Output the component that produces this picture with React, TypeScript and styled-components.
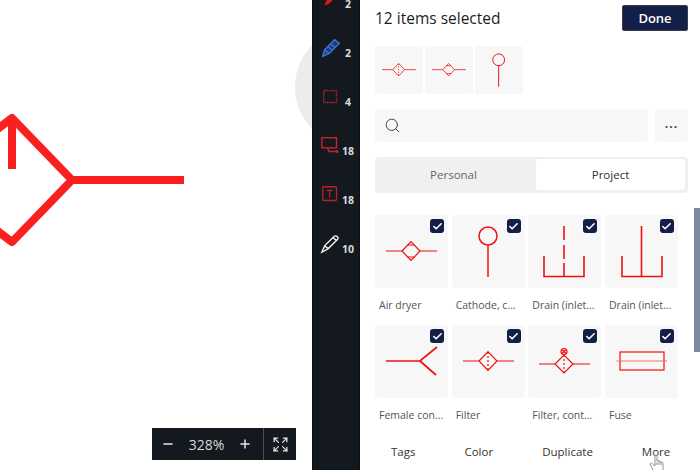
import React from 'react';
import styled, { createGlobalStyle } from 'styled-components';
import { Check, Expand, Minus, Plus, Search } from 'lucide-react';

const GlobalStyle = createGlobalStyle`
  html, body {
    margin: 0;
    height: 100%;
    overflow: hidden;
    background: #fff;
  }
  body {
    font-family: "Open Sans", "Noto Sans", sans-serif;
  }
`;

const Page = styled.div`
  display: flex;
  width: 700px;
  height: 470px;
  overflow: hidden;
`;

const Canvas = styled.div`
  position: relative;
  width: 312px;
  flex-shrink: 0;
  overflow: hidden;
  background: #fff;
`;

const CanvasDrawing = styled.svg`
  position: absolute;
  left: 0;
  top: 90px;
`;

const Halo = styled.div`
  position: absolute;
  left: 295px;
  top: 27px;
  width: 120px;
  height: 120px;
  border-radius: 50%;
  background: #ececec;
`;

const ZoomBar = styled.div`
  position: absolute;
  left: 152px;
  top: 428px;
  width: 144px;
  height: 32px;
  display: flex;
  align-items: center;
  background: #14191f;
  color: #e6e6e6;
`;

const ZoomControls = styled.div`
  flex: 1;
  display: flex;
  align-items: center;
  justify-content: space-between;
  padding: 0 11px 0 9px;
`;

const ZoomValue = styled.span`
  font-size: 14px;
  color: #d8d8d8;
`;

const ZoomFit = styled.div`
  width: 32px;
  height: 100%;
  display: flex;
  align-items: center;
  justify-content: center;
  border-left: 1px solid #4a4f55;
`;

const Rail = styled.div`
  width: 48px;
  flex-shrink: 0;
  display: flex;
  flex-direction: column;
  margin-top: -26px;
  padding-left: 7px;
  box-sizing: border-box;
  background: #14191f;
  border-left: 1px solid #0c0f12;
  border-right: 1px solid #0d1014;
`;

const RailItem = styled.div`
  height: 49px;
  display: flex;
  align-items: flex-end;
`;

const RailCount = styled.span`
  width: 14px;
  margin-left: -1px;
  margin-bottom: 12px;
  text-align: center;
  color: #dcdcdc;
  font-size: 10.5px;
  font-weight: 700;
  line-height: 14px;
`;

const RailIcon = styled.svg`
  width: 22px;
  height: 22px;
  flex-shrink: 0;
  margin-bottom: 13px;
`;

const Panel = styled.div`
  flex: 1;
  min-width: 0;
  position: relative;
  display: flex;
  flex-direction: column;
  padding: 5px 12px 0 15px;
  background: #fff;
`;

const Header = styled.div`
  display: flex;
  align-items: center;
  justify-content: space-between;
`;

const Title = styled.h1`
  margin: 0;
  font-size: 15.5px;
  font-weight: 400;
  color: #1b1f24;
`;

const DoneButton = styled.button`
  width: 66px;
  height: 26px;
  padding: 0;
  border: 1px solid #3b3f45;
  border-radius: 2px;
  background: #141f48;
  color: #fff;
  font: 600 13px "Open Sans", sans-serif;
`;

const ThumbRow = styled.div`
  display: flex;
  gap: 2px;
  margin-top: 15px;
`;

const Thumb = styled.div`
  width: 48px;
  height: 48px;
  background: #f7f7f7;
  border-radius: 3px;
`;

const SearchRow = styled.div`
  display: flex;
  gap: 7px;
  margin-top: 15px;
`;

const SearchBox = styled.div`
  flex: 1;
  height: 33px;
  display: flex;
  align-items: center;
  padding-left: 9px;
  background: #f7f7f7;
  border-radius: 3px;
  color: #444;
`;

const MoreButton = styled.div`
  width: 33px;
  height: 33px;
  display: flex;
  align-items: center;
  justify-content: center;
  padding-bottom: 4px;
  box-sizing: border-box;
  background: #f7f7f7;
  border-radius: 3px;
  color: #444;
  font-size: 12px;
  font-weight: 700;
  letter-spacing: 1px;
`;

const Tabs = styled.div`
  display: grid;
  grid-template-columns: 161px 149px;
  height: 36px;
  margin-top: 15px;
  padding: 2px 3px 3px 0;
  box-sizing: border-box;
  background: #f0f0f0;
  border-radius: 4px;
`;

const Tab = styled.div<{ $active?: boolean }>`
  display: flex;
  align-items: center;
  justify-content: center;
  padding-right: ${({ $active }) => ($active ? '0' : '4px')};
  font-size: 11.5px;
  border-radius: 3px;
  background: ${({ $active }) => ($active ? '#fff' : 'transparent')};
  color: ${({ $active }) => ($active ? '#2b3140' : '#666')};
`;

const Grid = styled.div`
  display: grid;
  grid-template-columns: repeat(4, 73px);
  column-gap: 3.67px;
  margin-top: 22px;
`;

const Item = styled.div`
  height: 110px;
`;

const ItemPreview = styled.div`
  position: relative;
  height: 73px;
  background: #f7f7f7;
  border-radius: 4px;
`;

const Checkbox = styled.span`
  position: absolute;
  top: 4px;
  right: 4px;
  width: 14px;
  height: 14px;
  display: flex;
  align-items: center;
  justify-content: center;
  background: #141f48;
  border-radius: 3px;
  color: #fff;
`;

const ItemLabel = styled.div`
  margin-top: 9px;
  padding: 0 4px;
  font-size: 10.5px;
  line-height: 16px;
  color: #555;
  white-space: nowrap;
`;

const Actions = styled.div`
  display: flex;
  gap: 49px;
  margin-top: 9px;
  padding-left: 16px;
`;

const Action = styled.div`
  font-size: 11.5px;
  line-height: 16px;
  color: #333;
`;

const Scrollbar = styled.div`
  position: absolute;
  right: 0;
  top: 208px;
  width: 6px;
  height: 144px;
  background: #7a8a9c;
`;

const HandCursor = styled.svg`
  position: absolute;
  left: 289px;
  top: 453px;
`;

const RED = '#f01010';

const Glyph = ({ children }: { children: React.ReactNode }) => (
  <svg width="100%" height="100%" viewBox="0 0 73 73" fill="none" stroke={RED} strokeWidth="1.2">
    {children}
  </svg>
);

const Diamond = ({ cy = 36, ry = 9.5 }: { cy?: number; ry?: number }) => (
  <path d={`M27 ${cy}L36 ${cy - ry}L45 ${cy}L36 ${cy + ry}Z`} />
);

const AirDryer = () => (
  <Glyph>
    <path d="M11 36H27M45 36H62" />
    <Diamond />
    <path d="M32.5 30H39.5M32.5 42H39.5" />
  </Glyph>
);

const Cathode = () => (
  <Glyph>
    <circle cx="36" cy="21" r="9" strokeWidth="1.5" />
    <path d="M36 30V62" strokeWidth="1.5" />
  </Glyph>
);

const DrainDashed = () => (
  <Glyph>
    <path d="M36 11V25M36 30V44M36 48V62" strokeWidth="1.6" />
    <path d="M16 41V61.5H56V41" strokeWidth="1.6" />
  </Glyph>
);

const DrainSolid = () => (
  <Glyph>
    <path d="M36.5 11V62" strokeWidth="1.6" />
    <path d="M17 41V61.5H57V41" strokeWidth="1.6" />
  </Glyph>
);

const FemaleConnector = () => (
  <Glyph>
    <path d="M11 36H45L62 22M45 36L61 50" strokeWidth="1.7" />
  </Glyph>
);

const Filter = () => (
  <Glyph>
    <path d="M11 36H27M45 36H62" />
    <Diamond />
    <path d="M36 27V46" strokeDasharray="2 2" />
  </Glyph>
);

const FilterContact = () => (
  <Glyph>
    <path d="M11 39H27M45 39H62" />
    <Diamond cy={39} ry={9} />
    <path d="M36 30V48" strokeDasharray="2 2" />
    <circle cx="36" cy="26.5" r="3" />
    <path d="M34 24.5L38 28.5M38 24.5L34 28.5" />
  </Glyph>
);

const Fuse = () => (
  <Glyph>
    <rect x="15" y="27" width="44" height="18" />
    <path d="M11.5 36H62" stroke="#ee7a55" />
  </Glyph>
);

const items: { name: string; glyph: React.ReactNode }[] = [
  { name: 'Air dryer', glyph: <AirDryer /> },
  { name: 'Cathode, c...', glyph: <Cathode /> },
  { name: 'Drain (inlet...', glyph: <DrainDashed /> },
  { name: 'Drain (inlet...', glyph: <DrainSolid /> },
  { name: 'Female con...', glyph: <FemaleConnector /> },
  { name: 'Filter', glyph: <Filter /> },
  { name: 'Filter, cont...', glyph: <FilterContact /> },
  { name: 'Fuse', glyph: <Fuse /> },
];

const railTools: { count: number; icon: React.ReactNode }[] = [
  {
    count: 2,
    icon: <path d="M5 19L7 14L16 5L19 8L10 17Z" fill="#e01a1a" />,
  },
  {
    count: 2,
    icon: <path d="M3 21L5 14L16 3L21 7L10 18ZM5 14L10 18M8 10L13 14M11 7L16 11" stroke="#3f74d8" strokeWidth="1.5" fill="#1d3a78" />,
  },
  {
    count: 4,
    icon: <rect x="4" y="5" width="14" height="13" rx="1" stroke="#b3242a" strokeWidth="1.5" strokeDasharray="1.6 0.8" fill="none" />,
  },
  {
    count: 18,
    icon: (
      <g stroke="#c4262b" strokeWidth="1.5" fill="none">
        <rect x="2" y="3" width="16" height="11" />
        <path d="M8 14L10 18H18" />
        <circle cx="18.5" cy="18" r="1" fill="#c4262b" />
      </g>
    ),
  },
  {
    count: 18,
    icon: (
      <g stroke="#b3242a" strokeWidth="1.4" fill="none">
        <rect x="3" y="3" width="15" height="15" rx="1" />
        <path d="M7 7H14M10.5 7V15" />
      </g>
    ),
  },
  {
    count: 10,
    icon: (
      <g stroke="#f5efe0" strokeWidth="1.5" fill="none">
        <path d="M2 21L5 14L15 4C16 3 18 3 19 4C20 5 20 6 19 7L9 17Z" />
        <path d="M5 14L9 17M14 5L18 8" />
      </g>
    ),
  },
];

export default function App() {
  return (
    <>
      <GlobalStyle />
      <Page>
        <Canvas>
          <Halo />
          <CanvasDrawing width="200" height="170" viewBox="0 0 200 170" fill="none" stroke="#fa2020" strokeWidth="8">
            <path d="M-30 60L12 28L72 90L12 152L-30 120" strokeLinejoin="round" />
            <path d="M12 28V79" />
            <path d="M72 90H184" />
          </CanvasDrawing>
          <ZoomBar>
            <ZoomControls>
              <Minus size={14} strokeWidth={2.5} />
              <ZoomValue>328%</ZoomValue>
              <Plus size={14} strokeWidth={2.5} />
            </ZoomControls>
            <ZoomFit>
              <Expand size={17} strokeWidth={1.8} />
            </ZoomFit>
          </ZoomBar>
        </Canvas>
        <Rail>
          {railTools.map((tool, i) => (
            <RailItem key={i}>
              <RailIcon viewBox="0 0 24 24">{tool.icon}</RailIcon>
              <RailCount>{tool.count}</RailCount>
            </RailItem>
          ))}
        </Rail>
        <Panel>
          <Header>
            <Title>12 items selected</Title>
            <DoneButton>Done</DoneButton>
          </Header>
          <ThumbRow>
            <Thumb><Filter /></Thumb>
            <Thumb><AirDryer /></Thumb>
            <Thumb><Cathode /></Thumb>
          </ThumbRow>
          <SearchRow>
            <SearchBox>
              <Search size={17} strokeWidth={1.4} />
            </SearchBox>
            <MoreButton>...</MoreButton>
          </SearchRow>
          <Tabs>
            <Tab>Personal</Tab>
            <Tab $active>Project</Tab>
          </Tabs>
          <Grid>
            {items.map((item, i) => (
              <Item key={i}>
                <ItemPreview>
                  {item.glyph}
                  <Checkbox>
                    <Check size={11} strokeWidth={3.5} />
                  </Checkbox>
                </ItemPreview>
                <ItemLabel>{item.name}</ItemLabel>
              </Item>
            ))}
          </Grid>
          <Actions>
            <Action>Tags</Action>
            <Action>Color</Action>
            <Action>Duplicate</Action>
            <Action>More</Action>
          </Actions>
          <Scrollbar />
          <HandCursor width="18" height="17" viewBox="0 0 18 17" fill="#fff" stroke="#777" strokeWidth="0.8">
            <path d="M4 17L1 11L2.5 10L6 13V3C6 1.5 8 1.5 8 3V8C8 7 10 7 10 8V9C10 8 12 8 12 9V10C12 9 14 9 14 10.5V17" />
            <path d="M8 9V12M10 9V12M12 10V12" />
          </HandCursor>
        </Panel>
      </Page>
    </>
  );
}
